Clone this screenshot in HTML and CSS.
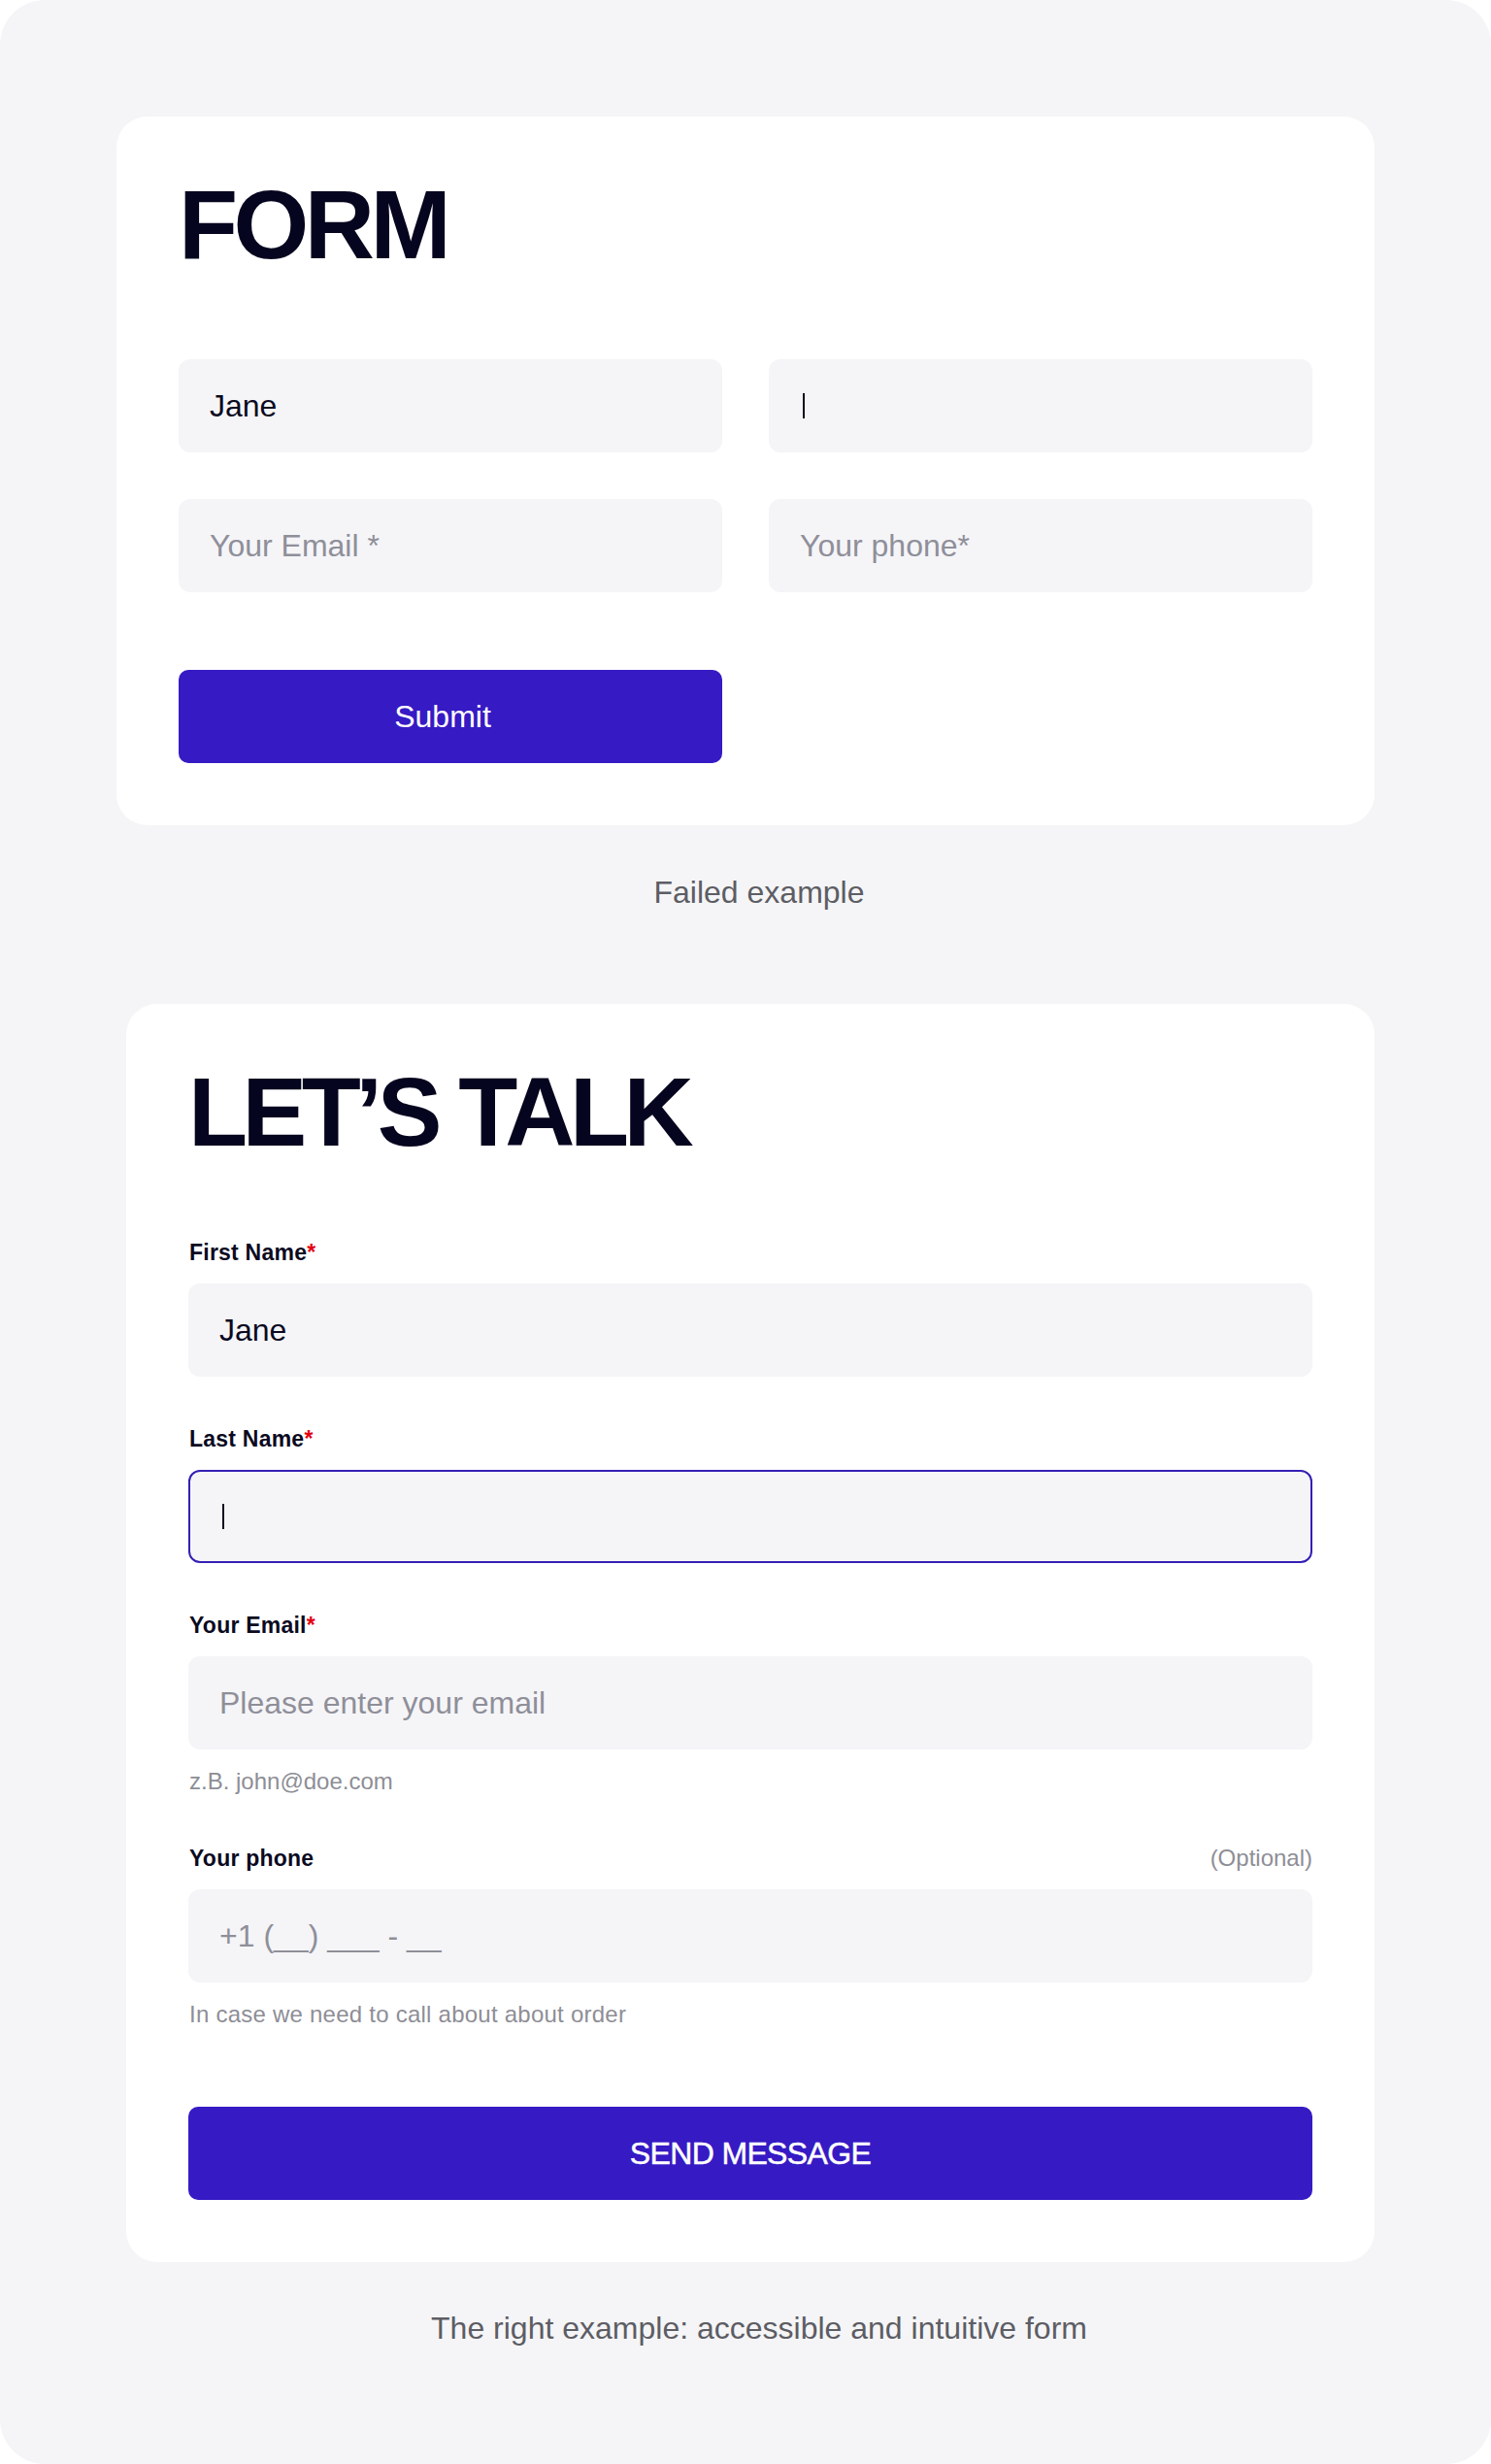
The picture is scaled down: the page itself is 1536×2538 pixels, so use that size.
FILE: index.html
```html
<!DOCTYPE html>
<html lang="en">
<head>
<meta charset="utf-8">
<title>Forms</title>
<link rel="stylesheet" href="styles.css">
</head>
<body>
<div class="page">
  <section class="card">
    <h1 class="title">FORM</h1>
    <div class="grid">
      <div class="input"><span class="value">Jane</span></div>
      <div class="input"><span class="caret"></span></div>
      <div class="input"><span class="placeholder">Your Email *</span></div>
      <div class="input"><span class="placeholder">Your phone*</span></div>
    </div>
    <button class="btn btn-half" type="button">Submit</button>
  </section>
  <p class="caption caption-first">Failed example</p>

  <section class="card card-right">
    <h1 class="title">LET’S TALK</h1>
    <div class="form">
      <div class="field">
        <div class="label-row"><span class="label">First Name<span class="req">*</span></span></div>
        <div class="input"><span class="value">Jane</span></div>
      </div>
      <div class="field">
        <div class="label-row"><span class="label">Last Name<span class="req">*</span></span></div>
        <div class="input input-focus"><span class="caret"></span></div>
      </div>
      <div class="field">
        <div class="label-row"><span class="label">Your Email<span class="req">*</span></span></div>
        <div class="input"><span class="placeholder">Please enter your email</span></div>
        <div class="hint">z.B. john@doe.com</div>
      </div>
      <div class="field">
        <div class="label-row"><span class="label">Your phone</span><span class="optional">(Optional)</span></div>
        <div class="input"><span class="placeholder">+1 (__) ___ - __</span></div>
        <div class="hint">In case we need to call about about order</div>
      </div>
    </div>
    <button class="btn btn-full" type="button">SEND MESSAGE</button>
  </section>
  <p class="caption">The right example: accessible and intuitive form</p>
</div>
</body>
</html>
```

FILE: styles.css
```css
html, body {
  margin: 0;
  padding: 0;
  background: #ffffff;
}

body {
  font-family: "Liberation Sans", Arial, Helvetica, sans-serif;
  color: #0b0a1f;
}

.page {
  box-sizing: border-box;
  min-height: 2538px;
  padding: 120px 120px 120px 120px;
  background: #f5f5f7;
  border-radius: 46px;
}

.card {
  background: #ffffff;
  border-radius: 32px;
  padding: 61px 64px 64px 64px;
}

.card-right {
  margin-left: 10px;
}

.title {
  margin: 0;
  font-size: 100px;
  line-height: 100px;
  font-weight: 700;
  letter-spacing: -0.045em;
  color: #06051f;
}

.card-right .title {
  letter-spacing: -0.055em;
}

.grid {
  display: grid;
  grid-template-columns: 1fr 1fr;
  gap: 48px;
  margin-top: 89px;
}

.input {
  box-sizing: border-box;
  display: flex;
  align-items: center;
  height: 96px;
  padding: 0 32px;
  background: #f5f5f8;
  border-radius: 12px;
  font-size: 32px;
  line-height: 40px;
}

.input-focus {
  border: 2px solid #3420b4;
  padding: 0 30px;
}

.value {
  color: #0b0a1f;
}

.placeholder {
  color: #8f8f99;
}

.caret {
  display: block;
  width: 2px;
  height: 26px;
  margin-left: 3px;
  background: #0b0a1f;
}

.btn {
  display: block;
  box-sizing: border-box;
  height: 96px;
  border: 0;
  border-radius: 10px;
  background: #361ac4;
  color: #ffffff;
  font-family: "Liberation Sans", Arial, Helvetica, sans-serif;
  font-size: 32px;
  line-height: 40px;
  padding: 0;
  cursor: pointer;
}

.btn-half {
  width: 560px;
  margin-top: 80px;
  padding-right: 16px;
}

.btn-full {
  width: 100%;
  margin-top: 80px;
  letter-spacing: -0.02em;
  -webkit-text-stroke: 0.5px #ffffff;
}

.caption {
  margin: 48px 0 0 0;
  padding-left: 28px;
  text-align: center;
  font-size: 32px;
  line-height: 40px;
  color: #5d5d64;
}

.caption-first {
  margin: 49px 0 95px 0;
}

.form {
  display: flex;
  flex-direction: column;
  gap: 50px;
  margin-top: 81px;
}

.label-row {
  display: flex;
  justify-content: space-between;
  align-items: baseline;
  font-size: 23px;
  line-height: 28px;
  padding-left: 1px;
}

.label {
  font-weight: 700;
  color: #0b0a1f;
  letter-spacing: 0.01em;
}

.req {
  color: #e3000f;
}

.optional {
  font-size: 24px;
  font-weight: 400;
  letter-spacing: 0;
  color: #8e8e96;
}

.field .input {
  margin-top: 18px;
}

.hint {
  margin-top: 18px;
  padding-left: 1px;
  font-size: 24px;
  line-height: 30px;
  color: #8e8e96;
}

.field:last-child .hint {
  letter-spacing: 0.01em;
}
```
